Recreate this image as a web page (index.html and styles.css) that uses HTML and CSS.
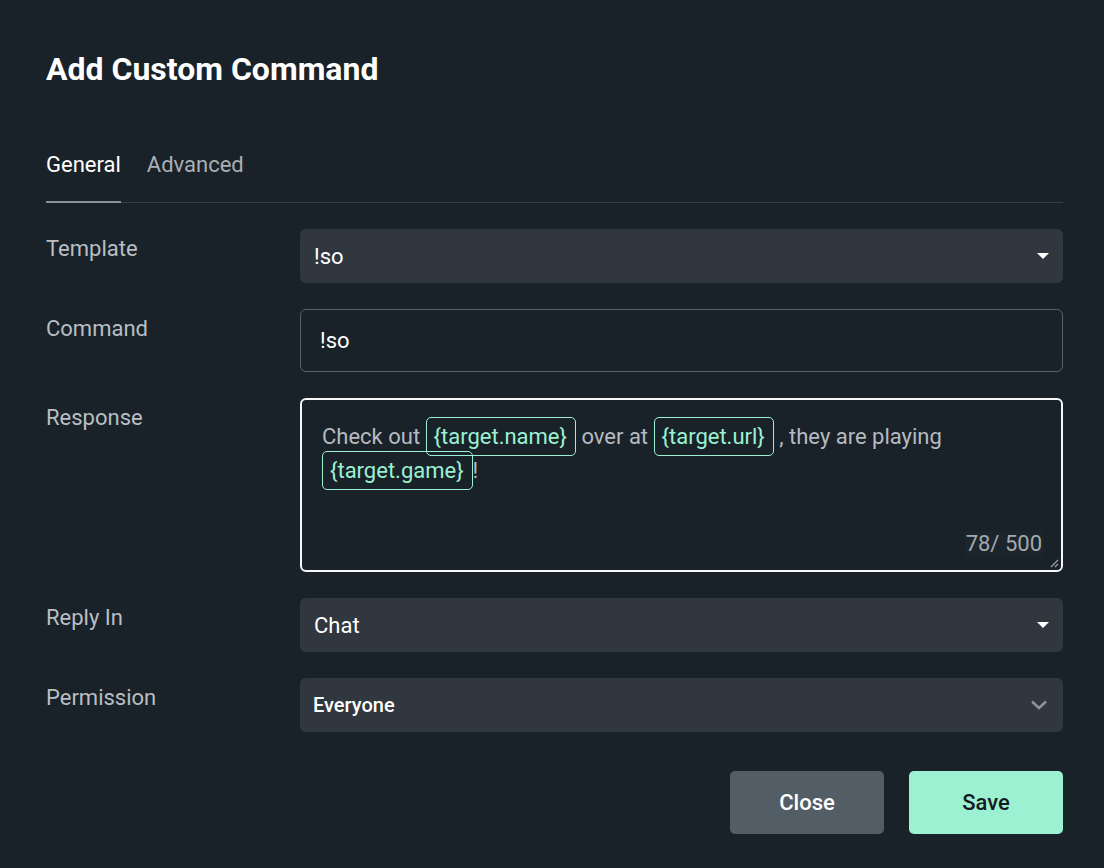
FILE: index.html
```html
<!DOCTYPE html>
<html lang="en">
<head>
    <meta charset="UTF-8">
    <meta name="viewport" content="width=device-width, initial-scale=1.0">
    <title>Add Custom Command</title>
    <link rel="stylesheet" href="styles.css">
</head>
<body>
    <div class="dialog">
        <h1 class="dialog-title">Add Custom Command</h1>

        <div class="tabs">
            <a class="tab active" href="#">General</a>
            <a class="tab" href="#">Advanced</a>
        </div>

        <form class="command-form">
            <label class="field-label">Template</label>
            <div class="select">
                <span class="select-value">!so</span>
                <span class="caret"></span>
            </div>

            <label class="field-label">Command</label>
            <div class="text-input">!so</div>

            <label class="field-label">Response</label>
            <div class="response-box">
                <div class="response-text">
                    Check out <span class="var">{target.name}</span> over at <span class="var">{target.url}</span> , they are playing
                    <span class="var">{target.game}</span>!
                </div>
                <div class="char-count">78/ 500</div>
                <svg class="grip" width="10" height="10" viewBox="0 0 10 10">
                    <path d="M9 2 L2 9 M9 6 L6 9" stroke="#9aa1a7" stroke-width="1.2" fill="none"/>
                </svg>
            </div>

            <label class="field-label">Reply In</label>
            <div class="select">
                <span class="select-value">Chat</span>
                <span class="caret"></span>
            </div>

            <label class="field-label">Permission</label>
            <div class="select select-bold">
                <span class="select-value">Everyone</span>
                <svg class="chevron" width="18" height="10" viewBox="0 0 18 10">
                    <path d="M2 1.5 L9 8 L16 1.5" stroke="#8d949a" stroke-width="2.4" fill="none"/>
                </svg>
            </div>
        </form>

        <div class="actions">
            <button class="btn btn-close" type="button">Close</button>
            <button class="btn btn-save" type="button">Save</button>
        </div>
    </div>
</body>
</html>
```

FILE: styles.css
```css
/* General */
body {
    margin: 0;
    padding: 0;
    background-color: #1a2229;
    font-family: Roboto, "Liberation Sans", sans-serif;
    color: #ffffff;
}

.dialog {
    padding: 49px 41px 33px 46px;
}

.dialog-title {
    margin: 0;
    font-size: 32px;
    font-weight: 700;
    line-height: 40px;
}

/* Tabs */
.tabs {
    display: flex;
    gap: 26px;
    margin-top: 61px;
    border-bottom: 1px solid #353d44;
}

.tab {
    color: #a9afb5;
    text-decoration: none;
    font-size: 22px;
    line-height: 30px;
    padding-bottom: 22px;
    margin-bottom: -1px;
}

.tab.active {
    color: #ffffff;
    border-bottom: 2px solid #8a9298;
    padding-bottom: 21px;
}

/* Form rows */
.command-form {
    display: grid;
    grid-template-columns: 254px 1fr;
    row-gap: 26px;
    margin-top: 26px;
}

.field-label {
    color: #b9bec3;
    font-size: 22px;
    line-height: 40px;
}

.select {
    display: flex;
    align-items: center;
    justify-content: space-between;
    height: 54px;
    padding: 0 14px;
    background-color: #30373e;
    border-radius: 6px;
    font-size: 22px;
}

.select-bold {
    font-size: 20px;
    font-weight: 500;
    padding-left: 13px;
}

.caret {
    width: 0;
    height: 0;
    border-left: 6px solid transparent;
    border-right: 6px solid transparent;
    border-top: 6px solid #ffffff;
}

.chevron {
    margin-right: 1px;
}

.text-input {
    height: 61px;
    line-height: 61px;
    padding: 0 19px;
    border: 1px solid #596067;
    border-radius: 6px;
    font-size: 22px;
}

/* Response editor */
.response-box {
    position: relative;
    height: 174px;
    box-sizing: border-box;
    border: 2px solid #f4f6f7;
    border-radius: 6px;
}

.response-text {
    padding: 20px 20px 0 20px;
    color: #b5bbc1;
    font-size: 22px;
    line-height: 34px;
}

.var {
    color: #9cf1d3;
    border: 1px solid #9cf1d3;
    border-radius: 5px;
    padding: 6px 8px 6px 7px;
}

.char-count {
    position: absolute;
    right: 18px;
    bottom: 14px;
    color: #a3a9ae;
    font-size: 22px;
    background-color: #1d252c;
    padding: 0 1px;
}

.grip {
    position: absolute;
    right: 2px;
    bottom: 2px;
}

/* Buttons */
.actions {
    display: flex;
    justify-content: flex-end;
    gap: 25px;
    margin-top: 39px;
}

.btn {
    width: 154px;
    height: 63px;
    border: none;
    border-radius: 5px;
    font-family: Roboto, "Liberation Sans", sans-serif;
    font-size: 22px;
    font-weight: 500;
}

.btn-close {
    background-color: #535d65;
    color: #ffffff;
}

.btn-save {
    background-color: #9cf1d3;
    color: #141b20;
}
```
